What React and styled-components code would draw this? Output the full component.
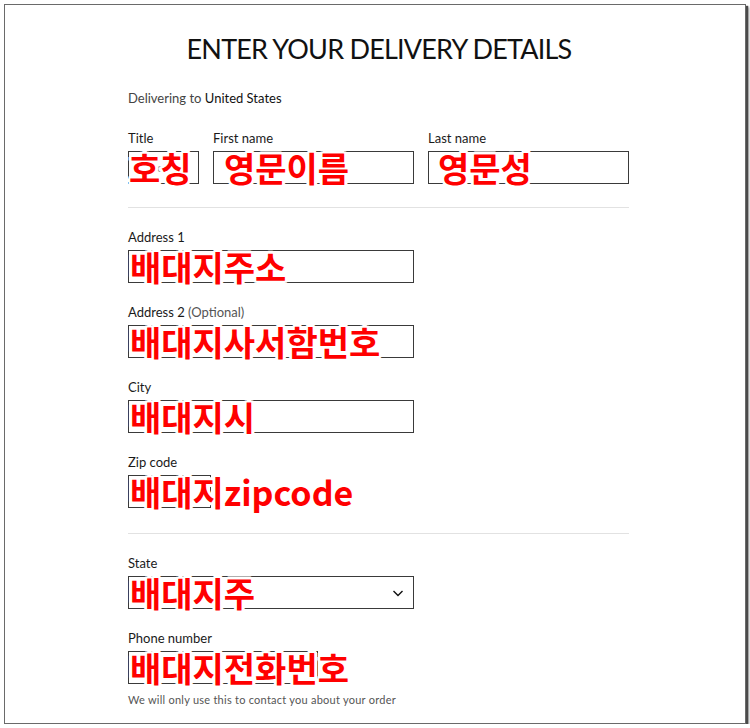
import React from 'react'
import styled, { createGlobalStyle } from 'styled-components'

const GlobalStyle = createGlobalStyle`
  body {
    margin: 0;
    background: #fff;
    font-family: Lato, "Liberation Sans", sans-serif;
  }
`

const Frame = styled.div`
  box-sizing: border-box;
  margin: 4px 0 0 4px;
  width: 742px;
  height: 720px;
  border: 1px solid #6a6a6a;
  box-shadow: 2px 2px 1px #4a4a4a, 3px 3px 2px #9a9a9a;
  background: #fff;
  overflow: hidden;
`

const Heading = styled.h1`
  margin: 28px 0 0;
  text-align: center;
  font-family: Lato, "Liberation Sans", sans-serif;
  font-weight: 400;
  font-size: 27px;
  line-height: 32px;
  letter-spacing: -0.8px;
  color: #111;
  padding-left: 8px;
`

const Form = styled.div`
  width: 501px;
  margin: 0 0 0 123px;
  display: flex;
  flex-direction: column;
`

const Country = styled.div`
  margin-top: 24px;
  font-size: 13px;
  line-height: 18px;
  color: #444;
  span {
    color: #111;
  }
`

const NameRow = styled.div`
  margin-top: 22px;
  display: grid;
  grid-template-columns: 71px 1fr 1fr;
  column-gap: 14px;
`

const Fields = styled.div`
  display: flex;
  flex-direction: column;
  gap: 20px;
`

const Field = styled.div`
  display: flex;
  flex-direction: column;
  width: ${p => p.$width || '100%'};
`

const Label = styled.div`
  font-size: 13px;
  line-height: 18px;
  color: #1a1a1a;
  margin-bottom: 4px;
  white-space: nowrap;
  span {
    color: #555;
  }
`

const Box = styled.div`
  position: relative;
  box-sizing: border-box;
  height: 33px;
  border: 1px solid #3a3a3a;
  display: flex;
  align-items: center;
  padding: 0 6px;
  font-size: 12px;
  color: #999;
`

const Chevron = styled.svg`
  margin-left: auto;
  margin-right: 1px;
`

const Note = styled.span`
  position: absolute;
  left: ${p => p.$left}px;
  top: -2px;
  font-family: "Noto Sans CJK KR", sans-serif;
  font-weight: 700;
  font-size: 34px;
  line-height: 35px;
  color: #ff0000;
  white-space: nowrap;
  text-shadow:
    3px 0 0 #fff, -3px 0 0 #fff, 0 3px 0 #fff, 0 -3px 0 #fff,
    2px 2px 0 #fff, -2px 2px 0 #fff, 2px -2px 0 #fff, -2px -2px 0 #fff;
`

const Divider = styled.hr`
  border: none;
  border-top: 1px solid #e2e2e2;
  margin: ${p => p.$top || 23}px 0 20px;
  width: 100%;
`

const Help = styled.div`
  margin-top: 9px;
  font-size: 11px;
  line-height: 14px;
  color: #555;
  letter-spacing: 0.25px;
`

const Input = ({ label, note, left = 1, width, placeholder, select }) => (
  <Field $width={width}>
    <Label>{label}</Label>
    <Box>
      {placeholder}
      {select && (
        <Chevron width="16" height="16" viewBox="0 0 16 16" fill="none">
          <path d="M3.5 6l4.5 4.5L12.5 6" stroke="#111" strokeWidth="1.4" />
        </Chevron>
      )}
      <Note $left={left}>{note}</Note>
    </Box>
  </Field>
)

export default function App() {
  return (
    <>
      <GlobalStyle />
      <Frame>
        <Heading>ENTER YOUR DELIVERY DETAILS</Heading>
        <Form>
          <Country>Delivering to <span>United States</span></Country>
          <NameRow>
            <Input label="Title" note="호칭" left={0} placeholder="Select" />
            <Input label="First name" note="영문이름" left={10} />
            <Input label="Last name" note="영문성" left={9} />
          </NameRow>
          <Divider />
          <Fields>
            <Input label="Address 1" note="배대지주소" width="286px" />
            <Input label={<>Address 2 <span>(Optional)</span></>} note="배대지사서함번호" width="286px" />
            <Input label="City" note="배대지시" width="286px" />
            <Input label="Zip code" note="배대지zipcode" width="83px" />
          </Fields>
          <Divider $top={25} />
          <Fields>
            <Input label="State" note="배대지주" width="286px" placeholder="Select" select />
            <Field>
              <Input label="Phone number" note="배대지전화번호" width="190px" />
              <Help>We will only use this to contact you about your order</Help>
            </Field>
          </Fields>
        </Form>
      </Frame>
    </>
  )
}
